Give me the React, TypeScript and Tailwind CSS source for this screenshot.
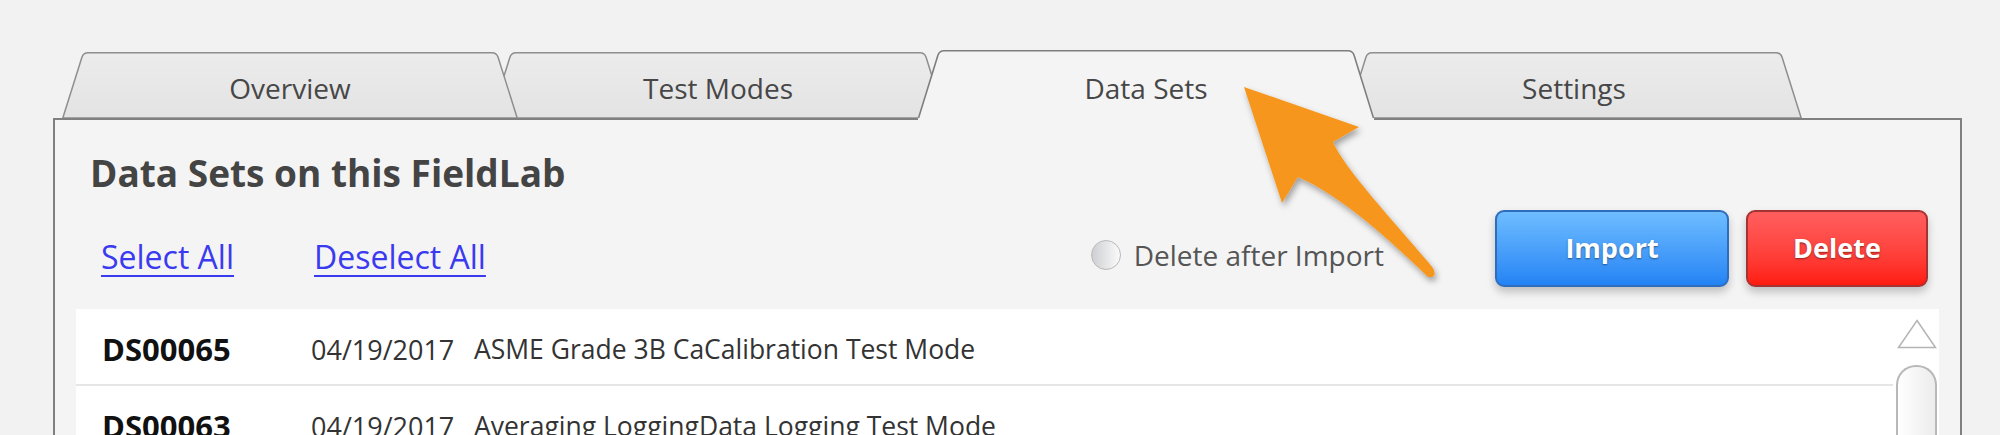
import React from "react";

type TabProps = {
  label: string;
  active?: boolean;
  className?: string;
};

function Tab({ label, active, className }: TabProps) {
  return (
    <div className={`relative h-[68px] w-[456px] shrink-0 ${className ?? ""}`}>
      {active ? (
        <svg className="absolute left-0 top-0" width="456" height="71" viewBox="0 0 456 71">
          <path d="M0,71 L0,68 L20,5 Q21.5,0.8 26,0.8 L430,0.8 Q434.5,0.8 436,5 L456,68 L456,71 Z" fill="#f4f4f4" />
          <path d="M0.5,68 L20,5 Q21.5,0.8 26,0.8 L430,0.8 Q434.5,0.8 436,5 L455.5,68" fill="none" stroke="#7e7e7e" strokeWidth="1.6" />
        </svg>
      ) : (
        <svg className="absolute left-0 top-0" width="456" height="68" viewBox="0 0 456 68">
          <defs>
            <linearGradient id="tabfill" x1="0" y1="0" x2="0" y2="1">
              <stop offset="0" stopColor="#ececec" />
              <stop offset="1" stopColor="#e3e3e3" />
            </linearGradient>
          </defs>
          <path d="M0.8,68 L20,7 Q21.5,2.8 26,2.8 L430,2.8 Q434.5,2.8 436,7 L455.2,68 Z" fill="url(#tabfill)" stroke="#8e8e8e" strokeWidth="1.5" />
        </svg>
      )}
      <div className="relative flex h-full items-start justify-center pt-[24px] text-[28px] leading-none text-[#474747]">
        {label}
      </div>
    </div>
  );
}

const rows = [
  { id: "DS00065", date: "04/19/2017", name: "ASME Grade 3B CaCalibration Test Mode" },
  { id: "DS00063", date: "04/19/2017", name: "Averaging LoggingData Logging Test Mode" },
];

export default function App() {
  return (
    <div className="relative h-[435px] w-[2000px] overflow-hidden bg-[#f2f2f2] font-['Open_Sans',sans-serif]">
      <div className="pl-[53px] pr-[38px] pt-[50px]">
        {/* tabs */}
        <div className="relative z-10 flex pl-[9px]">
          <Tab label="Overview" className="z-20" />
          <Tab label="Test Modes" className="z-10 -ml-[28px]" />
          <Tab label="Data Sets" active className="z-30 -ml-[28px]" />
          <Tab label="Settings" className="z-0 -ml-[28px]" />
        </div>

        {/* panel */}
        <div className="h-[320px] border-2 border-b-0 border-[#808080] bg-[#f4f4f4]">
          <h1 className="ml-[35px] mt-[34px] text-[37px] font-bold leading-none text-[#444]">
            Data Sets on this FieldLab
          </h1>

          <div className="mt-[19px] flex items-start pr-[32px]">
            <div className="ml-[46px] mt-[31px] flex gap-[80px] text-[32px] leading-none text-[#3a3af0]">
              <a className="underline decoration-2 underline-offset-[6px]">Select All</a>
              <a className="underline decoration-2 underline-offset-[6px]">Deselect All</a>
            </div>

            <div className="ml-auto mr-[111px] mt-[30px] flex items-center gap-[13px]">
              <span className="h-[30px] w-[30px] rounded-full border border-[#b9b9b9] bg-gradient-to-r from-[#cdcfd2] to-[#fbfbfb]" />
              <span className="text-[28px] leading-none text-[#555]">Delete after Import</span>
            </div>

            <div className="flex gap-[17px]">
              <button className="h-[77px] w-[234px] rounded-[9px] border-2 border-[#2e6dbb] bg-gradient-to-b from-[#6ebdff] to-[#2383f4] text-[27px] font-bold text-white shadow-[0_5px_9px_rgba(0,0,0,0.22)] [text-shadow:0_1px_2px_rgba(0,0,0,0.45)]">
                Import
              </button>
              <button className="h-[77px] w-[182px] rounded-[9px] border-2 border-[#a53333] bg-gradient-to-b from-[#ff5e5e] to-[#ff190d] text-[27px] font-bold text-white shadow-[0_5px_9px_rgba(0,0,0,0.22)] [text-shadow:0_1px_2px_rgba(0,0,0,0.45)]">
                Delete
              </button>
            </div>
          </div>

          {/* list */}
          <div className="mx-[21px] mt-[22px] flex h-[200px] bg-white">
            <div className="flex-1">
              {rows.map((r) => (
                <div key={r.id} className="flex h-[77px] items-center border-b-2 border-[#e6e6e6] pl-[26px] pt-[6px]">
                  <span className="w-[209px] text-[31px] font-bold leading-none text-[#111]">{r.id}</span>
                  <span className="w-[163px] text-[27px] leading-none text-[#333]">{r.date}</span>
                  <span className="text-[26.5px] leading-none text-[#333]">{r.name}</span>
                </div>
              ))}
            </div>
            <div className="ml-[3px] mr-[2px] flex w-[41px] flex-col items-center pt-[10px]">
              <svg width="40" height="30" viewBox="0 0 40 30">
                <polygon points="20,1.5 38.5,28.5 1.5,28.5" fill="#fff" stroke="#b4b4b4" strokeWidth="1.5" />
              </svg>
              <div className="mt-[16px] h-[120px] w-[41px] rounded-t-[20px] border-2 border-b-0 border-[#b8b8b8] bg-gradient-to-r from-white to-[#ececec]" />
            </div>
          </div>
        </div>
      </div>

      {/* callout arrow */}
      <svg className="pointer-events-none absolute left-0 top-0 z-40" width="2000" height="435" viewBox="0 0 2000 435">
        <defs>
          <filter id="shadow" x="-20%" y="-20%" width="140%" height="140%">
            <feDropShadow dx="2" dy="4" stdDeviation="3" floodColor="#000" floodOpacity="0.35" />
          </filter>
        </defs>
        <path
          d="M1244,87 L1359,127 L1333,142 C1345,170 1400,228 1433,268 Q1438,278 1428,277 C1390,240 1340,195 1298,177 L1282,203 Z"
          fill="#f7961e"
          filter="url(#shadow)"
        />
      </svg>
    </div>
  );
}
